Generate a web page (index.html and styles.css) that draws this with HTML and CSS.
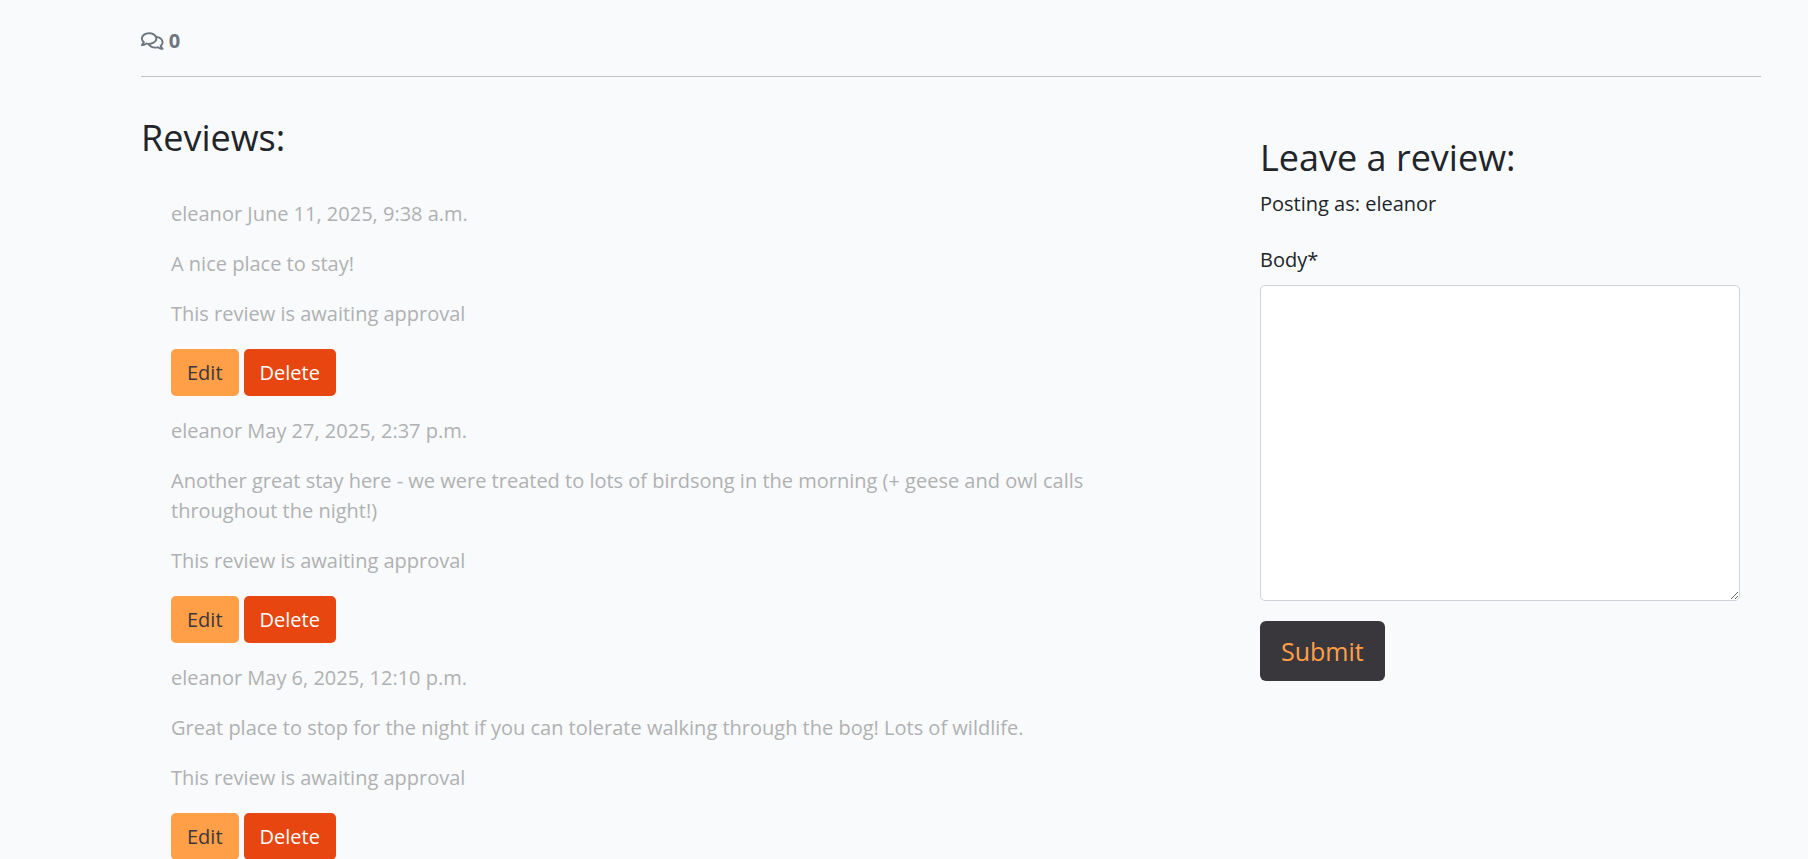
FILE: index.html
```html
<!DOCTYPE html>
<html lang="en">
<head>
<meta charset="utf-8">
<meta name="viewport" content="width=device-width, initial-scale=1">
<title>Reviews</title>
<link rel="stylesheet" href="styles.css">
</head>
<body>
<main class="page">
  <div class="summary">
    <strong class="count"><svg class="count-icon" viewBox="0 0 576 512" aria-hidden="true"><path fill="currentColor" d="M532 386.2c27.5-27.1 44-61.1 44-98.2 0-80-76.5-146.1-176.2-157.9C368.3 72.5 294.3 32 208 32 93.1 32 0 103.6 0 192c0 37 16.5 71 44 98.2-15.3 30.7-37.3 54.5-37.7 54.9-6.3 6.7-8.1 16.5-4.4 25 3.6 8.5 12 14 21.2 14 53.5 0 96.7-20.2 125.2-38.8 9.2 2.1 18.7 3.7 28.4 4.9C208.1 407.6 281.8 448 368 448c20.8 0 40.8-2.4 59.8-6.8C456.3 459.7 499.4 480 553 480c9.2 0 17.5-5.5 21.2-14 3.6-8.5 1.9-18.3-4.4-25-.4-.3-22.5-24.1-37.8-54.8zm-392.8-92.3L122.1 305c-14.1 9.1-28.5 16.3-43.1 21.4 2.7-4.7 5.4-9.7 8-14.8l15.5-31.1L77.7 256C64.2 242.6 48 220.7 48 192c0-60.7 73.3-112 160-112s160 51.3 160 112-73.3 112-160 112c-16.5 0-33-1.9-49-5.6l-19.8-4.5zM498.3 352l-24.7 24.4 15.5 31.1c2.6 5.1 5.3 10.1 8 14.8-14.6-5.1-29-12.3-43.1-21.4l-17.1-11.1-19.9 4.6c-16 3.7-32.5 5.6-49 5.6-54 0-102.2-20.1-131.3-49.7C338 339.5 416 272.9 416 192c0-3.4-.4-6.7-.7-10C479.7 196.5 528 238.8 528 288c0 28.7-16.2 50.6-29.7 64z"/></svg> 0</strong>
    <hr class="divider">
  </div>
  <div class="columns">
    <section class="reviews">
      <h3 class="heading">Reviews:</h3>
      <div class="review-list">
        <article class="review">
          <p>eleanor June 11, 2025, 9:38 a.m.</p>
          <p>A nice place to stay!</p>
          <p>This review is awaiting approval</p>
          <div class="actions">
            <button type="button" class="btn btn-edit">Edit</button>
            <button type="button" class="btn btn-delete">Delete</button>
          </div>
        </article>
        <article class="review">
          <p>eleanor May 27, 2025, 2:37 p.m.</p>
          <p>Another great stay here - we were treated to lots of birdsong in the morning (+ geese and owl calls throughout the night!)</p>
          <p>This review is awaiting approval</p>
          <div class="actions">
            <button type="button" class="btn btn-edit">Edit</button>
            <button type="button" class="btn btn-delete">Delete</button>
          </div>
        </article>
        <article class="review">
          <p>eleanor May 6, 2025, 12:10 p.m.</p>
          <p>Great place to stop for the night if you can tolerate walking through the bog! Lots of wildlife.</p>
          <p>This review is awaiting approval</p>
          <div class="actions">
            <button type="button" class="btn btn-edit">Edit</button>
            <button type="button" class="btn btn-delete">Delete</button>
          </div>
        </article>
      </div>
    </section>
    <section class="compose">
      <h3 class="heading">Leave a review:</h3>
      <p class="posting-as">Posting as: eleanor</p>
      <form class="review-form">
        <label class="field-label" for="body">Body*</label>
        <textarea class="field" id="body" name="body" rows="10" required></textarea>
        <button type="submit" class="btn btn-submit">Submit</button>
      </form>
    </section>
  </div>
</main>
</body>
</html>
```
FILE: styles.css
```css
*,
*::before,
*::after {
  box-sizing: border-box;
}

html {
  scrollbar-width: none;
}

body {
  margin: 0;
  background: #f9fafc;
  color: #212529;
  font-family: "Open Sans", "Liberation Sans", sans-serif;
  font-size: 20px;
  line-height: 30px;
}

p {
  margin: 0;
}

.page {
  padding: 26px 32px 0 126px;
}

.summary {
  padding: 0 15px;
}

.count {
  display: block;
  color: #6c757d;
  font-weight: 700;
}

.count-icon {
  height: 20px;
  vertical-align: -3px;
}

.divider {
  margin: 20px 0 40px;
  border: 0;
  border-top: 1px solid #c1c3c5;
}

.columns {
  display: grid;
  grid-template-columns: 2fr 1fr;
}

.reviews {
  padding: 0 15px;
}

.compose {
  padding: 20px 36px 20px 34px;
}

.heading {
  margin: 0 0 10px;
  font-size: 36px;
  font-weight: 400;
  line-height: 42px;
}

.review-list {
  display: flex;
  flex-direction: column;
  gap: 20px;
  padding: 30px 30px 0;
}

.review {
  display: flex;
  flex-direction: column;
  gap: 20px;
  color: #afb1b2;
}

.actions {
  display: flex;
  gap: 5px;
}

.btn {
  padding: 8px 16px;
  border: 0;
  border-radius: 5px;
  font: inherit;
  line-height: 31px;
  cursor: pointer;
}

.btn-edit {
  background: #ffa048;
  color: #3a373c;
}

.btn-delete {
  background: #e84610;
  color: #fff;
}

.btn-submit {
  margin-top: 20px;
  padding: 11px 21px;
  border-radius: 6px;
  background: #3a373c;
  color: #ffa048;
  font-size: 25px;
  line-height: 38px;
}

.review-form {
  display: flex;
  flex-direction: column;
  align-items: flex-start;
  padding-top: 26px;
}

.field-label {
  margin-bottom: 10px;
}

.field {
  display: block;
  width: 100%;
  padding: 7px 15px;
  border: 1px solid #ced4da;
  border-radius: 5px;
  background: #fff;
  color: inherit;
  font: inherit;
  resize: vertical;
}
```
